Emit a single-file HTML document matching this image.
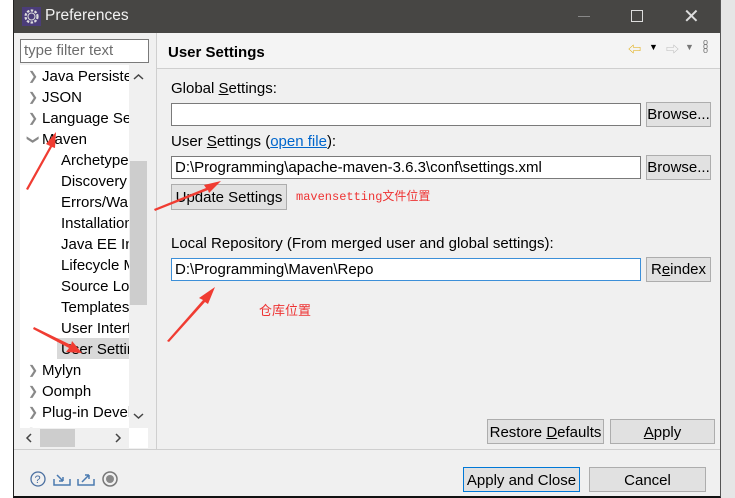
<!DOCTYPE html>
<html><head><meta charset="utf-8"><style>
*{margin:0;padding:0;box-sizing:border-box}
body{width:735px;height:498px;position:relative;overflow:hidden;background:#e6e6e6;font-family:"Liberation Sans","Noto Sans CJK SC",sans-serif;font-size:15px;color:#000}
.a{position:absolute;white-space:nowrap}
.btn{position:absolute;background:#e1e1e1;border:1px solid #adadad;text-align:center;line-height:23px}
.fld{position:absolute;background:#fff;border:1px solid #7a7a7a;padding-left:3px;line-height:21px}
.t{position:absolute;line-height:21px;white-space:nowrap}
.c{position:absolute;left:8px;color:#888;font-size:12px;line-height:21px}
u{text-decoration:underline}
</style></head><body>
<div class="a" style="left:0;top:0;width:14px;height:498px;background:#fff"></div>
<div class="a" style="left:13px;top:0;width:708px;height:498px;background:#f0f0f0;border-left:1px solid #222;border-right:1px solid #555;border-bottom:2px solid #111"></div>
<div class="a" style="left:14px;top:0;width:706px;height:33px;background:#474644"></div>
<svg class="a" style="left:22px;top:7px" width="19" height="19" viewBox="0 0 19 19"><rect width="19" height="19" fill="#4b3d7a"/><circle cx="9.5" cy="9.5" r="6" fill="none" stroke="#ddd" stroke-width="2.2" stroke-dasharray="2.5 1.4"/><circle cx="9.5" cy="9.5" r="3.5" fill="#4b3d7a" stroke="#ddd" stroke-width="1"/></svg>
<div class="a" style="left:45px;top:7px;color:#f2f2f2;font-size:15.5px">Preferences</div>
<div class="a" style="left:578px;top:16px;width:12px;height:1px;background:#888"></div>
<div class="a" style="left:631px;top:10px;width:12px;height:12px;border:1px solid #ddd"></div>
<div class="a" style="left:683px;top:4px;color:#ddd;font-size:20px">✕</div>

<!-- left panel -->
<div class="a" style="left:20px;top:39px;width:129px;height:24px;background:#fff;border:1px solid #7a7a7a;color:#6d6d6d;padding-left:3px;line-height:22px">type filter text</div>
<div class="a" style="left:20px;top:65px;width:128px;height:383px;background:#fff"></div>
<div class="a" style="left:20px;top:65px;width:109px;height:363px;overflow:hidden">
<div class="a" style="left:37px;top:273px;width:80px;height:21px;background:#d9d9d9"></div>
<div class="c" style="top:1px">❯</div><div class="t" style="left:22px;top:1px">Java Persistence</div>
<div class="c" style="top:22px">❯</div><div class="t" style="left:22px;top:22px">JSON</div>
<div class="c" style="top:43px">❯</div><div class="t" style="left:22px;top:43px">Language Server</div>
<div class="c" style="top:64px;transform:rotate(90deg)">❯</div><div class="t" style="left:22px;top:64px">Maven</div>
<div class="t" style="left:41px;top:85px">Archetypes</div>
<div class="t" style="left:41px;top:106px">Discovery</div>
<div class="t" style="left:41px;top:127px">Errors/Warnings</div>
<div class="t" style="left:41px;top:148px">Installations</div>
<div class="t" style="left:41px;top:169px">Java EE Integration</div>
<div class="t" style="left:41px;top:190px">Lifecycle Mappings</div>
<div class="t" style="left:41px;top:211px">Source Lookup</div>
<div class="t" style="left:41px;top:232px">Templates</div>
<div class="t" style="left:41px;top:253px">User Interface</div>
<div class="t" style="left:41px;top:274px">User Settings</div>
<div class="c" style="top:295px">❯</div><div class="t" style="left:22px;top:295px">Mylyn</div>
<div class="c" style="top:316px">❯</div><div class="t" style="left:22px;top:316px">Oomph</div>
<div class="c" style="top:337px">❯</div><div class="t" style="left:22px;top:337px">Plug-in Development</div>
<div class="c" style="top:358px">❯</div><div class="t" style="left:22px;top:358px">Remote Systems</div>
</div>
<div class="a" style="left:129px;top:65px;width:19px;height:363px;background:#f0f0f0"></div>
<div class="a" style="left:130px;top:161px;width:17px;height:144px;background:#cdcdcd"></div>
<svg class="a" style="left:129px;top:65px" width="19" height="363"><path d="M5 14l4.5-4 4.5 4M5 349l4.5 4 4.5-4" fill="none" stroke="#444" stroke-width="1.5"/></svg>
<div class="a" style="left:20px;top:428px;width:109px;height:20px;background:#f0f0f0"></div>
<div class="a" style="left:40px;top:429px;width:35px;height:18px;background:#cdcdcd"></div>
<svg class="a" style="left:20px;top:428px" width="109" height="20"><path d="M11 6l-4 4 4 4M96 6l4 4-4 4" fill="none" stroke="#444" stroke-width="1.5"/></svg>
<div class="a" style="left:156px;top:33px;width:1px;height:416px;background:#cfcfcf"></div>

<!-- right -->
<div class="a" style="left:157px;top:33px;width:563px;height:36px;background:#f4f4f4;border-bottom:1px solid #cfcfcf"></div>
<div class="a" style="left:168px;top:44px;font-weight:bold;font-size:15px">User Settings</div>
<div class="a" style="left:628px;top:39px;color:#e0a800;font-size:13px">⇦</div>
<div class="a" style="left:649px;top:42px;font-size:9px">▼</div>
<div class="a" style="left:666px;top:39px;color:#bbb;font-size:13px">⇨</div>
<div class="a" style="left:685px;top:42px;font-size:9px;color:#777">▼</div>
<div class="a" style="left:703px;top:40px;font-size:9px;color:#777;line-height:4px">o<br>o<br>o</div>

<div class="a" style="left:171px;top:80px">Global <u>S</u>ettings:</div>
<div class="fld" style="left:171px;top:103px;width:470px;height:23px"></div>
<div class="btn" style="left:646px;top:102px;width:65px;height:25px;line-height:24px">Browse...</div>
<div class="a" style="left:171px;top:133px">User <u>S</u>ettings (<span style="color:#0066cc;text-decoration:underline">open file</span>):</div>
<div class="fld" style="left:171px;top:156px;width:470px;height:23px">D:\Programming\apache-maven-3.6.3\conf\settings.xml</div>
<div class="btn" style="left:646px;top:155px;width:65px;height:25px;line-height:24px">Browse...</div>
<div class="btn" style="left:171px;top:184px;width:116px;height:26px;line-height:26px">Update Settings</div>
<div class="a" style="left:296px;top:187px;color:#e33;font-size:12px;font-family:'Liberation Mono','Noto Sans CJK SC',monospace">mavensetting文件位置</div>
<div class="a" style="left:171px;top:235px">Local Repository (From merged user and global settings):</div>
<div class="fld" style="left:171px;top:258px;width:470px;height:23px;border-color:#3c8fd8">D:\Programming\Maven\Repo</div>
<div class="btn" style="left:646px;top:257px;width:65px;height:25px;line-height:24px">R<u>e</u>index</div>
<div class="a" style="left:259px;top:300px;color:#e33;font-size:13px">仓库位置</div>

<div class="btn" style="left:487px;top:419px;width:117px;height:25px;line-height:25px">Restore <u>D</u>efaults</div>
<div class="btn" style="left:610px;top:419px;width:105px;height:25px;line-height:25px"><u>A</u>pply</div>
<div class="a" style="left:14px;top:449px;width:706px;height:1px;background:#cfcfcf"></div>
<div class="btn" style="left:463px;top:467px;width:117px;height:25px;line-height:25px;border-color:#0078d7">Apply and Close</div>
<div class="btn" style="left:589px;top:467px;width:117px;height:25px;line-height:25px">Cancel</div>

<svg class="a" style="left:28px;top:469px" width="90" height="20" viewBox="0 0 90 20">
<circle cx="10" cy="10" r="7" fill="none" stroke="#4a6fa0" stroke-width="1.3"/><text x="6.5" y="14" font-size="11" fill="#4a6fa0" font-family="Liberation Sans">?</text>
<path d="M26 10v6h16v-6M29 6l6 6M35 12v-4M35 12h-4" fill="none" stroke="#4a7ab0" stroke-width="1.5"/>
<path d="M50 10v6h16v-6M54 13l7-7M61 6v4M61 6h-4" fill="none" stroke="#4a7ab0" stroke-width="1.5"/>
<circle cx="82" cy="10" r="7" fill="none" stroke="#777" stroke-width="1.5"/><circle cx="82" cy="10" r="4" fill="#888"/>
</svg>

<svg class="a" style="left:0;top:0" width="735" height="498">
<g fill="#f03c32">
<polygon points="26,189 50,146 46,144 56,132 55,148 52,147 28,190"/>
<polygon points="154,209 206,188 204,185 221,181 209,193 208,190 155,211"/>
<polygon points="34,327 71,345 72,341 82,353 66,352 69,348 33,329"/>
<polygon points="167,341 203,300 199,298 215,287 208,304 205,302 169,342"/>
</g>
</svg>
</body></html>
